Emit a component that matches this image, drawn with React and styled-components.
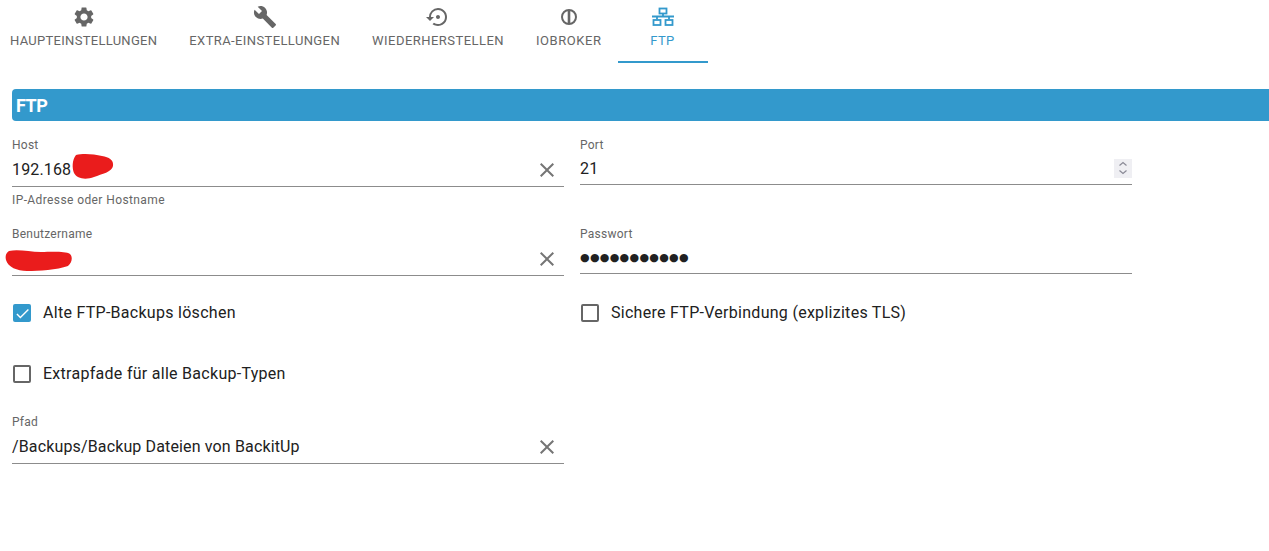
import React from 'react';
import styled, { createGlobalStyle } from 'styled-components';
import { MdSettings, MdBuild, MdSettingsBackupRestore, MdClose, MdCheck } from 'react-icons/md';

const BLUE = '#3399cc';

const IoBrokerIcon = () => (
  <svg width="24" height="24" viewBox="0 0 24 24" fill="none" stroke="currentColor">
    <circle cx="12" cy="12" r="7" strokeWidth="2" />
    <path d="M12 5v14" strokeWidth="2.6" />
  </svg>
);

const LanIcon = () => (
  <svg width="24" height="24" viewBox="0 0 24 24" fill="none" stroke="currentColor" strokeWidth="1.8">
    <rect x="8.5" y="3.5" width="7" height="5" />
    <path d="M12 8.5v3M1 11.5h22M6 11.5v3M18 11.5v3" />
    <rect x="2.5" y="15" width="7" height="5" />
    <rect x="14.5" y="15" width="7" height="5" />
  </svg>
);

const TABS = [
  { label: 'Haupteinstellungen', icon: <MdSettings size={24} />, tracking: 0.29 },
  { label: 'Extra-Einstellungen', icon: <MdBuild size={24} />, tracking: 0.39 },
  { label: 'Wiederherstellen', icon: <MdSettingsBackupRestore size={24} />, tracking: 0.46 },
  { label: 'ioBroker', icon: <IoBrokerIcon />, tracking: 0.55 },
  { label: 'FTP', icon: <LanIcon />, tracking: 0.4, active: true },
];

const Clear = () => (
  <ClearButton>
    <MdClose size={24} />
  </ClearButton>
);

const Check = ({ checked, label }) => (
  <CheckLine>
    <CheckBox $checked={checked}>{checked && <MdCheck size={17} color="#fff" />}</CheckBox>
    <CheckText>{label}</CheckText>
  </CheckLine>
);

const App = () => (
  <Page>
    <GlobalStyle />
    <TabBar>
      {TABS.map((tab) => (
        <Tab key={tab.label} $active={tab.active} $tracking={tab.tracking}>
          {tab.icon}
          <span>{tab.label}</span>
        </Tab>
      ))}
    </TabBar>
    <Section>
      <SectionTitle>FTP</SectionTitle>
      <Row $height={89}>
        <Field>
          <Label>Host</Label>
          <InputRow $tall>
            <Value>192.168</Value>
            <Clear />
            <Scribble $left={60} $top={1} width="42" height="27" viewBox="0 0 42 27">
              <path d="M4 2C11 0 22 1 30 3C37 4 42 7 41 13C40 19 30 21 22 24C14 27 5 26 2 20C0 15 0 7 4 2Z" />
            </Scribble>
          </InputRow>
          <Helper>IP-Adresse oder Hostname</Helper>
        </Field>
        <Field>
          <Label>Port</Label>
          <InputRow>
            <Value>21</Value>
            <Spinner>
              <svg width="10" height="14" viewBox="0 0 10 14" fill="none" stroke="#8a8a96" strokeWidth="1.2">
                <path d="M1.5 4.5L5 1.5L8.5 4.5M1.5 9.5L5 12.5L8.5 9.5" />
              </svg>
            </Spinner>
          </InputRow>
        </Field>
      </Row>
      <Row $height={56}>
        <Field>
          <Label>Benutzername</Label>
          <InputRow $tall>
            <Value />
            <Clear />
            <Scribble $left={-7} $top={8} width="68" height="24" viewBox="0 0 68 24">
              <path d="M4 2C14 0 24 3 36 3C46 3 60 2 65 5C68 8 67 14 63 17C52 21 34 22 22 22C12 22 3 18 1 11C0 7 1 4 4 2Z" />
            </Scribble>
          </InputRow>
        </Field>
        <Field>
          <Label>Passwort</Label>
          <InputRow>
            <Dots>●●●●●●●●●●●</Dots>
          </InputRow>
        </Field>
      </Row>
      <Row $height={60} $after={1}>
        <Check checked label="Alte FTP-Backups löschen" />
        <Check label="Sichere FTP-Verbindung (explizites TLS)" />
      </Row>
      <Row $height={60} $after={11}>
        <Check label="Extrapfade für alle Backup-Typen" />
      </Row>
      <Row $height={60}>
        <Field>
          <Label>Pfad</Label>
          <InputRow $tall>
            <Value>/Backups/Backup Dateien von BackitUp</Value>
            <Clear />
          </InputRow>
        </Field>
      </Row>
    </Section>
  </Page>
);

export default App;

const GlobalStyle = createGlobalStyle`
  html, body {
    margin: 0;
    background: #fff;
    overflow: hidden;
  }
`;

const Page = styled.div`
  width: 1269px;
  height: 551px;
  overflow: hidden;
  font-family: Roboto, 'Liberation Sans', sans-serif;
  color: #212121;
`;

const TabBar = styled.div`
  display: flex;
  height: 63px;
  margin-left: -6px;
`;

const Tab = styled.div`
  display: flex;
  flex-direction: column;
  align-items: center;
  box-sizing: border-box;
  min-width: 90px;
  height: 63px;
  padding: 5px 16px 0;
  gap: 3px;
  font-size: 13px;
  font-weight: 400;
  line-height: 18px;
  letter-spacing: ${({ $tracking }) => $tracking}px;
  text-transform: uppercase;
  white-space: nowrap;
  color: ${({ $active }) => ($active ? BLUE : '#666')};
  border-bottom: 2px solid ${({ $active }) => ($active ? BLUE : 'transparent')};
`;

const Section = styled.div`
  margin-top: 26px;
  padding-left: 12px;
`;

const SectionTitle = styled.div`
  box-sizing: border-box;
  height: 32px;
  margin-bottom: 17px;
  padding: 1px 0 0 4px;
  background: ${BLUE};
  border-radius: 4px 0 0 4px;
  color: #fff;
  font-size: 18px;
  font-weight: 700;
  letter-spacing: -0.5px;
  line-height: 32px;
`;

const Row = styled.div`
  display: grid;
  grid-template-columns: 552px 552px;
  column-gap: 16px;
  align-items: start;
  height: ${({ $height }) => $height}px;
  margin-bottom: ${({ $after }) => $after || 0}px;
`;

const Field = styled.div`
  display: flex;
  flex-direction: column;
`;

const Label = styled.label`
  font-size: 12px;
  line-height: 14px;
  letter-spacing: 0.25px;
  color: #666;
`;

const Helper = styled.div`
  margin-top: 6px;
  font-size: 12px;
  line-height: 14px;
  letter-spacing: 0.4px;
  color: #666;
`;

const InputRow = styled.div`
  position: relative;
  display: flex;
  align-items: center;
  justify-content: space-between;
  box-sizing: border-box;
  height: ${({ $tall }) => ($tall ? 35 : 33)}px;
  border-bottom: 1px solid #8c8c8c;
`;

const Value = styled.span`
  padding-top: 1px;
  font-size: 16px;
  line-height: 20px;
  letter-spacing: 0.14px;
  color: #212121;
`;

const Dots = styled.span`
  font-family: 'DejaVu Sans', sans-serif;
  font-size: 11px;
  letter-spacing: 0.3px;
  color: #212121;
`;

const ClearButton = styled.span`
  display: flex;
  margin: 1px 5px 0 0;
  color: #757575;
`;

const Spinner = styled.span`
  display: flex;
  align-items: center;
  justify-content: center;
  width: 18px;
  height: 19px;
  background: #efeff3;
`;

const Scribble = styled.svg`
  position: absolute;
  left: ${({ $left }) => $left}px;
  top: ${({ $top }) => $top}px;
  fill: #ea1c1c;
`;

const CheckLine = styled.div`
  display: flex;
  align-items: center;
  align-self: center;
  gap: 12px;
  height: 24px;
  padding-left: 1px;
  font-size: 16px;
  letter-spacing: 0.28px;
  color: #212121;
`;

const CheckText = styled.span`
  margin-bottom: 2px;
`;

const CheckBox = styled.span`
  display: flex;
  align-items: center;
  justify-content: center;
  box-sizing: border-box;
  width: 18px;
  height: 18px;
  border-radius: 2px;
  background: ${({ $checked }) => ($checked ? BLUE : 'transparent')};
  border: ${({ $checked }) => ($checked ? 'none' : '2px solid #666')};
`;
